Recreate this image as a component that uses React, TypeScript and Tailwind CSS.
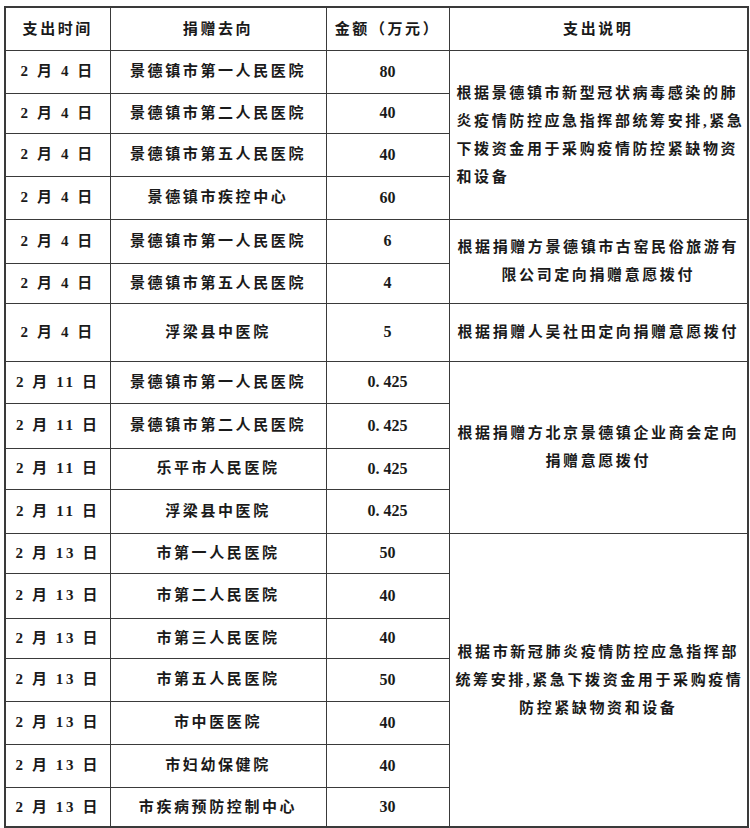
const rows: { date: string; to: string; amount: string; h: number }[] = [
  { date: '2 月 4 日', to: '景德镇市第一人民医院', amount: '80', h: 43 },
  { date: '2 月 4 日', to: '景德镇市第二人民医院', amount: '40', h: 40 },
  { date: '2 月 4 日', to: '景德镇市第五人民医院', amount: '40', h: 43 },
  { date: '2 月 4 日', to: '景德镇市疾控中心', amount: '60', h: 43 },
  { date: '2 月 4 日', to: '景德镇市第一人民医院', amount: '6', h: 44 },
  { date: '2 月 4 日', to: '景德镇市第五人民医院', amount: '4', h: 40 },
  { date: '2 月 4 日', to: '浮梁县中医院', amount: '5', h: 58 },
  { date: '2 月 11 日', to: '景德镇市第一人民医院', amount: '0. 425', h: 42 },
  { date: '2 月 11 日', to: '景德镇市第二人民医院', amount: '0. 425', h: 45 },
  { date: '2 月 11 日', to: '乐平市人民医院', amount: '0. 425', h: 41 },
  { date: '2 月 11 日', to: '浮梁县中医院', amount: '0. 425', h: 44 },
  { date: '2 月 13 日', to: '市第一人民医院', amount: '50', h: 40 },
  { date: '2 月 13 日', to: '市第二人民医院', amount: '40', h: 45 },
  { date: '2 月 13 日', to: '市第三人民医院', amount: '40', h: 40 },
  { date: '2 月 13 日', to: '市第五人民医院', amount: '50', h: 43 },
  { date: '2 月 13 日', to: '市中医医院', amount: '40', h: 43 },
  { date: '2 月 13 日', to: '市妇幼保健院', amount: '40', h: 43 },
  { date: '2 月 13 日', to: '市疾病预防控制中心', amount: '30', h: 40 },
];

// notes keyed by the row index where the merged cell starts
const notes: Record<number, { span: number; lines: string[]; left?: boolean }> = {
  0: {
    span: 4,
    left: true,
    lines: [
      '根据景德镇市新型冠状病毒感染的肺',
      '炎疫情防控应急指挥部统筹安排,紧急',
      '下拨资金用于采购疫情防控紧缺物资',
      '和设备',
    ],
  },
  4: { span: 2, lines: ['根据捐赠方景德镇市古窑民俗旅游有', '限公司定向捐赠意愿拨付'] },
  6: { span: 1, lines: ['根据捐赠人吴社田定向捐赠意愿拨付'] },
  7: { span: 4, lines: ['根据捐赠方北京景德镇企业商会定向', '捐赠意愿拨付'] },
  11: {
    span: 7,
    lines: ['根据市新冠肺炎疫情防控应急指挥部', '统筹安排,紧急下拨资金用于采购疫情', '防控紧缺物资和设备'],
  },
};

const cell = 'border border-[#3a3a3a] text-center align-middle p-0';

export default function App() {
  return (
    <div className="bg-white w-[750px] h-[828px] pt-[6px] pl-[4px] text-[#1a1a1a] font-bold text-[15px] tracking-[2.6px] [font-family:'Liberation_Serif','Noto_Sans_CJK_SC',serif]">
      <table className="w-[743px] table-fixed border-collapse border-2 border-[#3a3a3a]">
        <colgroup>
          <col className="w-[105px]" />
          <col className="w-[216px]" />
          <col className="w-[123px]" />
          <col className="w-[299px]" />
        </colgroup>
        <thead>
          <tr>
            <th className={`${cell} h-[43px] font-bold`}>支出时间</th>
            <th className={`${cell} h-[43px] font-bold`}>捐赠去向</th>
            <th className={`${cell} h-[43px] font-bold`}>金额（万元）</th>
            <th className={`${cell} h-[43px] font-bold`}>支出说明</th>
          </tr>
        </thead>
        <tbody>
          {rows.map((r, i) => {
            const note = notes[i];
            return (
              <tr key={i} style={{ height: r.h }}>
                <td className={`${cell} whitespace-nowrap`}>{r.date}</td>
                <td className={`${cell} whitespace-nowrap`}>{r.to}</td>
                <td className={`${cell} whitespace-nowrap tracking-normal text-[16px]`}>{r.amount}</td>
                {note && (
                  <td rowSpan={note.span} className={`${cell} px-[6px] leading-[28px]`}>
                    <div className={note.left ? 'text-left pl-[1px]' : 'text-center'}>
                      {note.lines.map((l, k) => (
                        <div key={k} className="whitespace-nowrap">
                          {l}
                        </div>
                      ))}
                    </div>
                  </td>
                )}
              </tr>
            );
          })}
        </tbody>
      </table>
    </div>
  );
}
